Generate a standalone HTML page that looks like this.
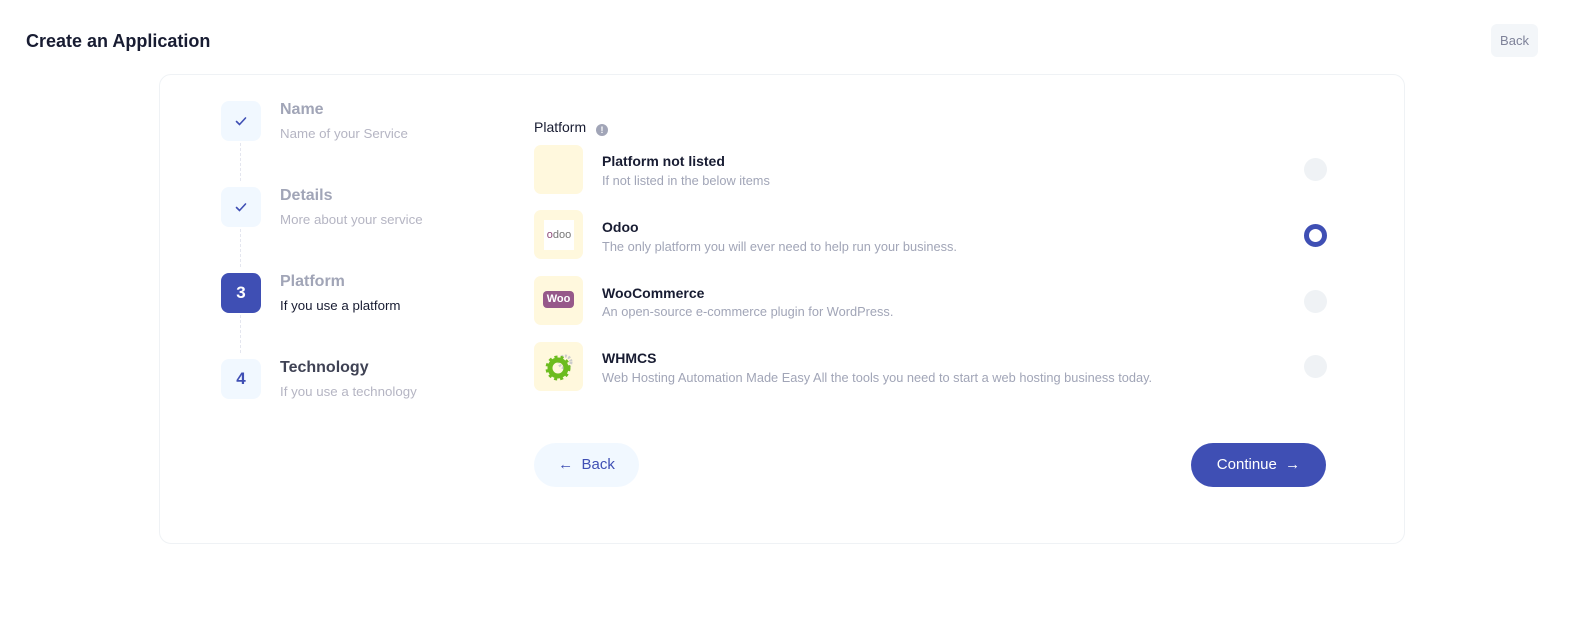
<!DOCTYPE html>
<html><head><style>
*{margin:0;padding:0;box-sizing:border-box}
body{width:1586px;height:631px;background:#fff;font-family:"Liberation Sans",sans-serif;position:relative;overflow:hidden}
.a{position:absolute}
h1{position:absolute;left:26px;top:31px;font-size:18px;font-weight:bold;color:#181c32}
.topback{left:1491px;top:24px;width:47px;height:33px;background:#f3f6f9;border-radius:6px;color:#7e8299;font-size:13px;text-align:center;line-height:33px}
.card{left:159px;top:74px;width:1246px;height:470px;border:1px solid #eff2f5;border-radius:12px}
.si{left:221px;width:40px;height:40px;border-radius:8px;background:#f1f8ff;color:#3f4fb4;font-weight:bold;font-size:17px;text-align:center;line-height:40px}
.st{left:280px;font-size:16px;font-weight:bold;color:#a1a5b7}
.sd{left:280px;font-size:13.3px;color:#b5b5c3}
.vl{left:240px;width:0;height:38px;border-left:1px dashed #e4e6ef}
.ic{left:534px;width:49px;height:49px;border-radius:7px;background:#fff8dd}
.it{left:602px;font-size:14px;font-weight:bold;color:#181c32}
.id{left:602px;font-size:12.8px;color:#a1a5b7}
.rd{left:1304px;width:23px;height:23px;border-radius:50%;background:#eff2f5}
</style></head><body>
<h1>Create an Application</h1>
<div class="a topback">Back</div>
<div class="a card"></div>

<div class="a si" style="top:101px"><svg width="14" height="14" viewBox="0 0 14 14" style="margin-top:13px"><path d="M2.5 7.5l3 3 6-6.5" stroke="#3f4fb4" stroke-width="1.6" fill="none" stroke-linecap="round"/></svg></div>
<div class="a st" style="top:101px">Name</div>
<div class="a sd" style="top:126px">Name of your Service</div>
<div class="a vl" style="top:143px"></div>
<div class="a si" style="top:187px"><svg width="14" height="14" viewBox="0 0 14 14" style="margin-top:13px"><path d="M2.5 7.5l3 3 6-6.5" stroke="#3f4fb4" stroke-width="1.6" fill="none" stroke-linecap="round"/></svg></div>
<div class="a st" style="top:187px">Details</div>
<div class="a sd" style="top:212px">More about your service</div>
<div class="a vl" style="top:229px"></div>
<div class="a si" style="top:273px;background:#3f4fb4;color:#fff">3</div>
<div class="a st" style="top:273px">Platform</div>
<div class="a sd" style="top:298px;color:#181c32">If you use a platform</div>
<div class="a vl" style="top:315px"></div>
<div class="a si" style="top:359px">4</div>
<div class="a st" style="top:359px;color:#3f4254">Technology</div>
<div class="a sd" style="top:384px">If you use a technology</div>

<div class="a" style="left:534px;top:119px;font-size:14px;color:#181c32">Platform <span style="display:inline-block;width:12px;height:12px;border-radius:50%;background:#a1a5b7;color:#fff;font-size:9px;text-align:center;line-height:12px;font-weight:bold;margin-left:6px;vertical-align:-1px">!</span></div>

<div class="a ic" style="top:145px"></div>
<div class="a it" style="top:153px">Platform not listed</div>
<div class="a id" style="top:173px">If not listed in the below items</div>
<div class="a rd" style="top:158px"></div>

<div class="a ic" style="top:210px"><div style="margin:10px 0 0 10px;width:30px;height:30px;background:#fff;font-size:11px;color:#777;line-height:30px;text-align:center"><span style="color:#8f4a7a">o</span>doo</div></div>
<div class="a it" style="top:219px">Odoo</div>
<div class="a id" style="top:239px">The only platform you will ever need to help run your business.</div>
<div class="a" style="left:1304px;top:224px;width:23px;height:23px;border-radius:50%;border:5px solid #3f4fb4;background:#fff"></div>

<div class="a ic" style="top:276px"><div style="margin:15px 0 0 9px;width:31px;height:17px;background:#96588a;border-radius:4px;color:#fff;font-size:11px;font-weight:bold;text-align:center;line-height:17px">Woo</div></div>
<div class="a it" style="top:285px">WooCommerce</div>
<div class="a id" style="top:304px">An open-source e-commerce plugin for WordPress.</div>
<div class="a rd" style="top:290px"></div>

<div class="a ic" style="top:342px"><svg width="49" height="49" viewBox="0 0 49 49"><circle cx="31" cy="20" r="6" fill="none" stroke="#ccc" stroke-width="3" stroke-dasharray="2 1.5"/><circle cx="24" cy="26" r="8" fill="none" stroke="#6cbc1f" stroke-width="5"/><circle cx="24" cy="26" r="11" fill="none" stroke="#6cbc1f" stroke-width="3" stroke-dasharray="3 3"/></svg></div>
<div class="a it" style="top:350px">WHMCS</div>
<div class="a id" style="top:370px">Web Hosting Automation Made Easy All the tools you need to start a web hosting business today.</div>
<div class="a rd" style="top:355px"></div>

<div class="a" style="left:534px;top:443px;width:105px;height:44px;border-radius:22px;background:#f1f8ff;color:#3f4fb4;font-size:15px;line-height:44px;text-align:center">&#8592;&nbsp; Back</div>
<div class="a" style="left:1191px;top:443px;width:135px;height:44px;border-radius:22px;background:#3f4fb4;color:#fff;font-size:15px;line-height:44px;text-align:center">Continue &nbsp;&#8594;</div>
</body></html>
